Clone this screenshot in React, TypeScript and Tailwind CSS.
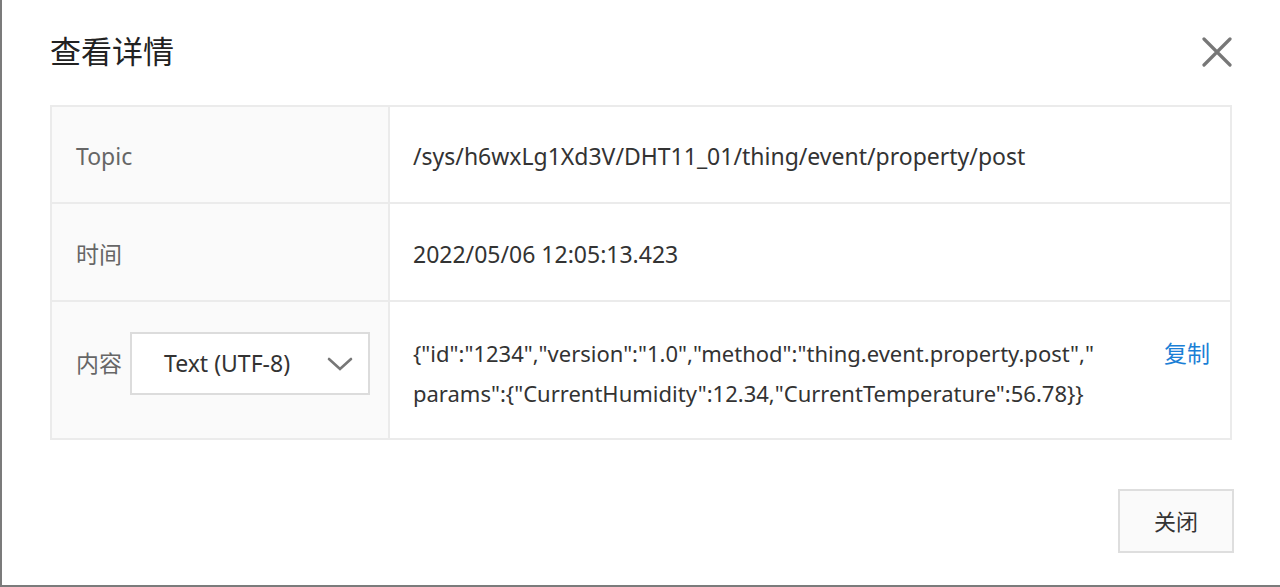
import { useState } from 'react'

const font = { fontFamily: '"Noto Sans", "Noto Sans CJK SC", sans-serif' }

export default function App() {
  const [encoding] = useState('Text (UTF-8)')

  return (
    <div
      className="h-[587px] w-full overflow-hidden border-b-2 border-l-2 border-[#7b7b7b] bg-white text-[#333]"
      style={font}
    >
      <div className="flex h-[105px] items-start justify-between pl-[48px] pr-[48px] pt-[28px]">
        <h2 className="text-[31px] leading-[46px] text-[#222]">查看详情</h2>
        <button type="button" className="mt-[9px] text-[#777]" aria-label="close">
          <svg width="30" height="30" viewBox="0 0 30 30">
            <path d="M2 2 L28 28 M28 2 L2 28" stroke="currentColor" strokeWidth="3.2" strokeLinecap="round" />
          </svg>
        </button>
      </div>

      <div className="mx-[48px] grid grid-cols-[338px_1fr] border-2 border-[#ebebeb] text-[23px]">
        <div className="flex h-[97px] items-center border-b-2 border-r-2 border-[#ebebeb] bg-[#fafafa] pl-[24px] pt-[4px] text-[#666]">
          Topic
        </div>
        <div className="flex h-[97px] items-center border-b-2 border-[#ebebeb] pl-[23px] pt-[4px]">
          /sys/h6wxLg1Xd3V/DHT11_01/thing/event/property/post
        </div>

        <div className="flex h-[98px] items-center border-b-2 border-r-2 border-[#ebebeb] bg-[#fafafa] pl-[24px] pt-[4px] text-[#666]">
          时间
        </div>
        <div className="flex h-[98px] items-center border-b-2 border-[#ebebeb] pl-[23px] pt-[4px]">
          2022/05/06 12:05:13.423
        </div>

        <div className="flex items-start gap-[8px] border-r-2 border-[#ebebeb] bg-[#fafafa] pl-[24px] pt-[30px] text-[#666]">
          <span className="flex h-[63px] items-center">内容</span>
          <div className="flex h-[63px] w-[240px] items-center justify-between border-2 border-[#dcdcdc] bg-white pl-[32px] pr-[15px] text-[#333]">
            <span>{encoding}</span>
            <svg width="26" height="16" viewBox="0 0 26 16" className="text-[#777]">
              <path d="M2 3 L13 13 L24 3" fill="none" stroke="currentColor" strokeWidth="2.6" strokeLinecap="round" />
            </svg>
          </div>
        </div>
        <div className="flex items-start justify-between pb-[25px] pl-[23px] pr-[20px] pt-[31px] leading-[40px]">
          <div className="text-[22px]">
            {'{"id":"1234","version":"1.0","method":"thing.event.property.post","'}
            <br />
            {'params":{"CurrentHumidity":12.34,"CurrentTemperature":56.78}}'}
          </div>
          <button type="button" className="leading-[40px] text-[#1b7fd6]">复制</button>
        </div>
      </div>

      <div className="flex justify-end pr-[46px] pt-[49px]">
        <button
          type="button"
          className="h-[64px] w-[116px] border-2 border-[#dedede] bg-[#fafafa] text-[22px] text-[#333]"
        >
          关闭
        </button>
      </div>
    </div>
  )
}
